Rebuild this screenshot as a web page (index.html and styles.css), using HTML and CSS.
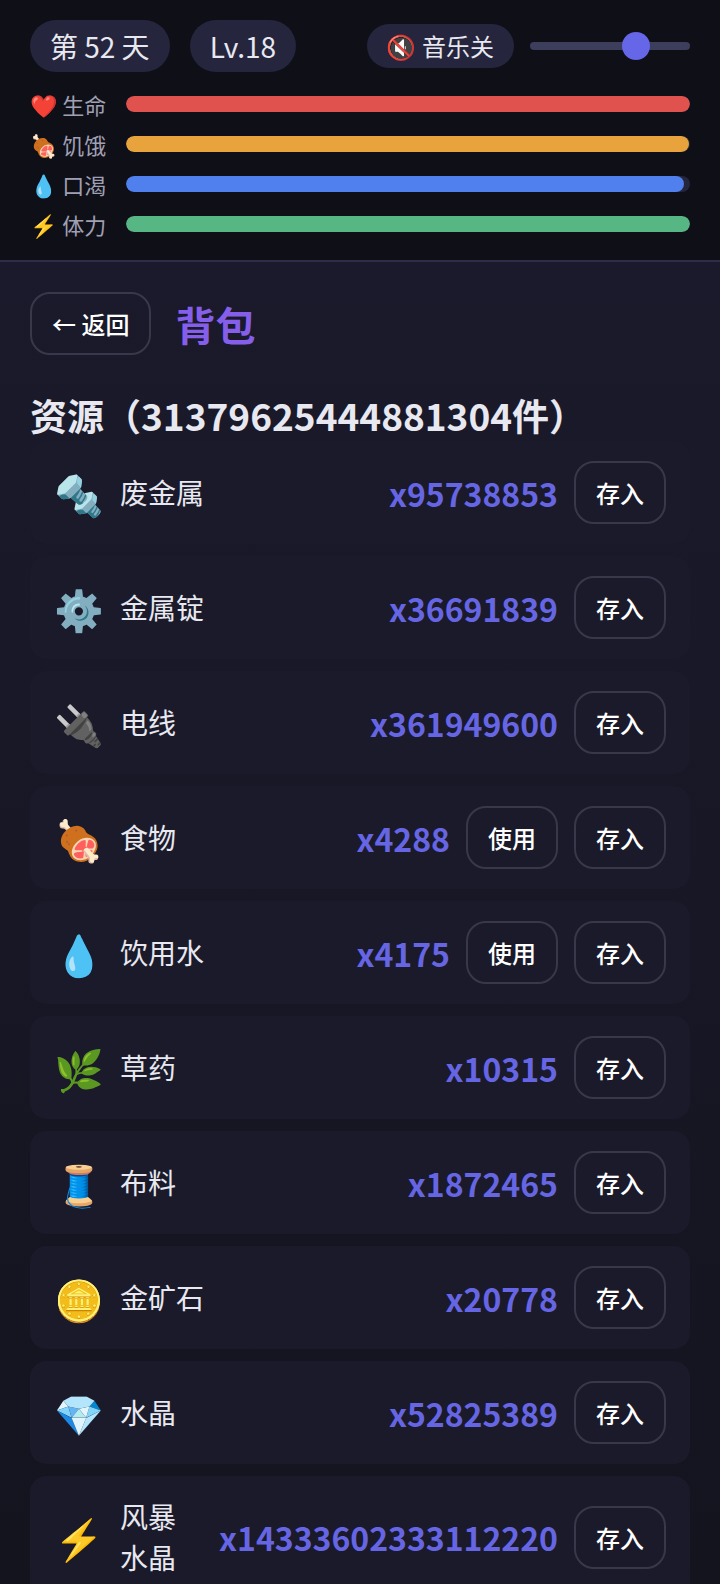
FILE: index.html
```
<!DOCTYPE html>
<html lang="zh-CN">
<head>
  <meta charset="UTF-8" />
  <meta name="viewport" content="width=device-width, initial-scale=1.0"/>
  <title>背包</title>
  <link rel="stylesheet" href="styles.css">
</head>
<body>
  <header class="status">
    <div class="status-top">
      <span class="chip">第 52 天</span>
      <span class="chip">Lv.18</span>
      <button class="music" type="button">🔇 音乐关</button>
      <input class="volume" type="range" min="0" max="100" value="70" aria-label="音量">
    </div>
    <div class="stats">
      <div class="stat"><span class="stat-label">❤️ 生命</span><div class="bar"><div class="fill hp" style="width: 100%"></div></div></div>
      <div class="stat"><span class="stat-label">🍖 饥饿</span><div class="bar"><div class="fill food" style="width: 99.8%"></div></div></div>
      <div class="stat"><span class="stat-label">💧 口渴</span><div class="bar"><div class="fill water" style="width: 99%"></div></div></div>
      <div class="stat"><span class="stat-label">⚡ 体力</span><div class="bar"><div class="fill energy" style="width: 100%"></div></div></div>
    </div>
  </header>

  <main class="content">
    <div class="title-row">
      <button class="btn" type="button">← 返回</button>
      <h1>背包</h1>
    </div>

    <h2>资源（31379625444881304件）</h2>
    <ul class="items">
      <li class="item"><span class="icon">🔩</span><span class="name">废金属</span><span class="qty">x95738853</span><button class="btn" type="button">存入</button></li>
      <li class="item"><span class="icon">⚙️</span><span class="name">金属锭</span><span class="qty">x36691839</span><button class="btn" type="button">存入</button></li>
      <li class="item"><span class="icon">🔌</span><span class="name">电线</span><span class="qty">x361949600</span><button class="btn" type="button">存入</button></li>
      <li class="item"><span class="icon">🍖</span><span class="name">食物</span><span class="qty">x4288</span><button class="btn" type="button">使用</button><button class="btn" type="button">存入</button></li>
      <li class="item"><span class="icon">💧</span><span class="name">饮用水</span><span class="qty">x4175</span><button class="btn" type="button">使用</button><button class="btn" type="button">存入</button></li>
      <li class="item"><span class="icon">🌿</span><span class="name">草药</span><span class="qty">x10315</span><button class="btn" type="button">存入</button></li>
      <li class="item"><span class="icon">🧵</span><span class="name">布料</span><span class="qty">x1872465</span><button class="btn" type="button">存入</button></li>
      <li class="item"><span class="icon">🪙</span><span class="name">金矿石</span><span class="qty">x20778</span><button class="btn" type="button">存入</button></li>
      <li class="item"><span class="icon">💎</span><span class="name">水晶</span><span class="qty">x52825389</span><button class="btn" type="button">存入</button></li>
      <li class="item"><span class="icon">⚡</span><span class="name">风暴水晶</span><span class="qty">x14333602333112220</span><button class="btn" type="button">存入</button></li>
    </ul>
  </main>
</body>
</html>
```
FILE: styles.css
```
* {
  box-sizing: border-box;
}

body {
  margin: 0;
  height: 100vh;
  display: flex;
  flex-direction: column;
  overflow: hidden;
  font-family: "Noto Sans CJK SC", "Noto Color Emoji", sans-serif;
  color: #e8e8f0;
  background: linear-gradient(180deg, #1b1b2e 0%, #14141f 100%);
}

button {
  font-family: inherit;
  cursor: pointer;
}

/* top status bar */
.status {
  flex: none;
  padding: 20px 30px;
  background: #0f0f18;
  border-bottom: 2px solid #2d2d48;
}

.status-top {
  display: flex;
  align-items: center;
  gap: 20px;
  height: 52px;
  margin-bottom: 16px;
}

.chip {
  padding: 6px 20px;
  border-radius: 26px;
  background: #25253d;
  font-size: 28px;
  line-height: 40px;
  white-space: nowrap;
}

.music {
  margin-left: auto;
  margin-right: -4px;
  padding: 4px 20px;
  border: none;
  border-radius: 22px;
  background: #25253d;
  color: #e8e8f0;
  font-size: 24px;
  line-height: 36px;
  white-space: nowrap;
}

.volume {
  appearance: none;
  width: 160px;
  height: 8px;
  margin: 0;
  border-radius: 4px;
  background: #3d3d5c;
}

.volume::-webkit-slider-thumb {
  appearance: none;
  width: 28px;
  height: 28px;
  border-radius: 50%;
  background: #6666e8;
}

.stats {
  display: grid;
  grid-auto-rows: 32px;
  gap: 8px;
}

.stat {
  display: flex;
  align-items: center;
  gap: 16px;
}

.stat-label {
  width: 80px;
  font-size: 22px;
  line-height: 32px;
  color: #a0a0b4;
  white-space: nowrap;
}

.bar {
  flex: 1;
  height: 16px;
  border-radius: 8px;
  background: #25253d;
  overflow: hidden;
}

.fill {
  height: 100%;
  border-radius: 8px;
}

.hp { background: #e0524d; }
.food { background: #e8a33d; }
.water { background: #4f80ee; }
.energy { background: #56b684; }

/* backpack */
.content {
  flex: 1;
  min-height: 0;
  padding: 30px;
  overflow-y: auto;
  scrollbar-width: none;
}

.title-row {
  display: flex;
  align-items: center;
  gap: 24px;
}

h1 {
  margin: 0;
  font-size: 40px;
  line-height: 60px;
  color: #855fea;
}

h2 {
  margin: 34px 0 0;
  font-size: 37px;
  line-height: 52px;
}

.btn {
  flex: none;
  height: 63px;
  padding: 0 20px;
  border: 2px solid #38384a;
  border-radius: 20px;
  background: transparent;
  color: #fff;
  font-size: 24px;
  font-weight: 500;
}

.items {
  display: grid;
  gap: 12px;
  margin: 0;
  padding: 0;
  list-style: none;
}

.item {
  display: flex;
  align-items: center;
  gap: 16px;
  padding: 20px 24px;
  border-radius: 16px;
  background: #1a1a2a;
}

.icon {
  flex: none;
  width: 50px;
  font-size: 40px;
  line-height: 48px;
  text-align: center;
}

.name {
  flex: 1;
  min-width: 0;
  font-size: 28px;
  line-height: 41px;
}

.qty {
  font-size: 32px;
  line-height: 48px;
  font-weight: bold;
  color: #6666e4;
}
```
